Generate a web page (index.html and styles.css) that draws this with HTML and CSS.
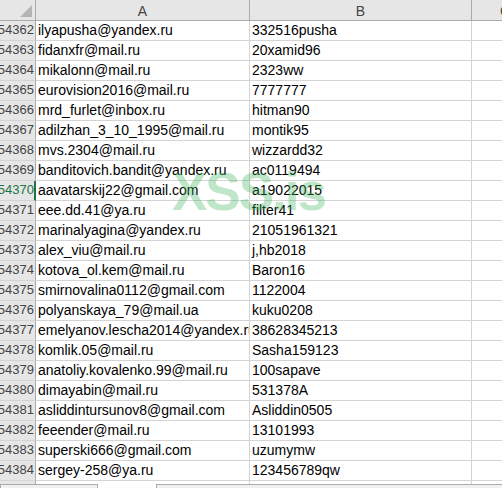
FILE: index.html
```html
<!DOCTYPE html>
<html>
<head>
<meta charset="utf-8">
<link rel="stylesheet" href="styles.css">
</head>
<body>
<div class="sheet">
  <div class="grid">
    <div class="hdr corner"><span class="tri"></span></div>
    <div class="hdr col">A</div>
    <div class="hdr col">B</div>
    <div class="hdr col colc">C</div>

    <div class="rn">54362</div><div class="c">ilyapusha@yandex.ru</div><div class="c">332516pusha</div><div class="c"></div>
    <div class="rn">54363</div><div class="c">fidanxfr@mail.ru</div><div class="c">20xamid96</div><div class="c"></div>
    <div class="rn">54364</div><div class="c">mikalonn@mail.ru</div><div class="c">2323ww</div><div class="c"></div>
    <div class="rn">54365</div><div class="c">eurovision2016@mail.ru</div><div class="c">7777777</div><div class="c"></div>
    <div class="rn">54366</div><div class="c">mrd_furlet@inbox.ru</div><div class="c">hitman90</div><div class="c"></div>
    <div class="rn">54367</div><div class="c">adilzhan_3_10_1995@mail.ru</div><div class="c">montik95</div><div class="c"></div>
    <div class="rn">54368</div><div class="c">mvs.2304@mail.ru</div><div class="c">wizzardd32</div><div class="c"></div>
    <div class="rn">54369</div><div class="c">banditovich.bandit@yandex.ru</div><div class="c">ac0119494</div><div class="c"></div>
    <div class="rn active">54370</div><div class="c">aavatarskij22@gmail.com</div><div class="c">a19022015</div><div class="c"></div>
    <div class="rn">54371</div><div class="c">eee.dd.41@ya.ru</div><div class="c">filter41</div><div class="c"></div>
    <div class="rn">54372</div><div class="c">marinalyagina@yandex.ru</div><div class="c">21051961321</div><div class="c"></div>
    <div class="rn">54373</div><div class="c">alex_viu@mail.ru</div><div class="c">j,hb2018</div><div class="c"></div>
    <div class="rn">54374</div><div class="c">kotova_ol.kem@mail.ru</div><div class="c">Baron16</div><div class="c"></div>
    <div class="rn">54375</div><div class="c">smirnovalina0112@gmail.com</div><div class="c">1122004</div><div class="c"></div>
    <div class="rn">54376</div><div class="c">polyanskaya_79@mail.ua</div><div class="c">kuku0208</div><div class="c"></div>
    <div class="rn">54377</div><div class="c">emelyanov.lescha2014@yandex.ru</div><div class="c">38628345213</div><div class="c"></div>
    <div class="rn">54378</div><div class="c">komlik.05@mail.ru</div><div class="c">Sasha159123</div><div class="c"></div>
    <div class="rn">54379</div><div class="c">anatoliy.kovalenko.99@mail.ru</div><div class="c">100sapave</div><div class="c"></div>
    <div class="rn">54380</div><div class="c">dimayabin@mail.ru</div><div class="c">531378A</div><div class="c"></div>
    <div class="rn">54381</div><div class="c">asliddintursunov8@gmail.com</div><div class="c">Asliddin0505</div><div class="c"></div>
    <div class="rn">54382</div><div class="c">feeender@mail.ru</div><div class="c">13101993</div><div class="c"></div>
    <div class="rn">54383</div><div class="c">superski666@gmail.com</div><div class="c">uzumymw</div><div class="c"></div>
    <div class="rn">54384</div><div class="c">sergey-258@ya.ru</div><div class="c">123456789qw</div><div class="c"></div>
    <div class="rn last"></div><div class="c last"></div><div class="c last"></div><div class="c last"></div>
  </div>
  <div class="tabs">
    <div class="tab t1"></div>
    <div class="gap"></div>
    <div class="tab t2"></div>
  </div>
  <div class="watermark">XSS.is</div>
</div>
</body>
</html>
```

FILE: styles.css
```css
html, body {
  margin: 0;
  padding: 0;
  background: #ffffff;
}
.sheet {
  position: relative;
  width: 502px;
  height: 488px;
  overflow: hidden;
  font-family: "Liberation Sans", Arial, sans-serif;
  font-size: 14px;
  color: #000;
}
.grid {
  display: grid;
  grid-template-columns: 36px 214px 222px 80px;
  grid-template-rows: 21px repeat(23, 20px) 3px;
  width: 552px;
}
.hdr {
  background: #e6e6e6;
  border-right: 1px solid #ababab;
  border-bottom: 1px solid #ababab;
  color: #444;
  display: flex;
  align-items: center;
  justify-content: center;
  box-sizing: border-box;
  padding-top: 1px;
}
.corner {
  position: relative;
}
.tri {
  position: absolute;
  right: 3px;
  bottom: 3px;
  width: 0;
  height: 0;
  border-left: 12px solid transparent;
  border-bottom: 12px solid #b4b4b4;
}
.colc {
  justify-content: flex-start;
  padding-left: 28px;
}
.rn {
  background: #e6e6e6;
  border-right: 1px solid #ababab;
  border-bottom: 1px solid #d4d4d4;
  color: #444;
  box-sizing: border-box;
  display: flex;
  align-items: flex-end;
  justify-content: flex-end;
  padding: 0 1px 2px 0;
  line-height: 16px;
  font-size: 13px;
  white-space: nowrap;
}
.rn.active {
  color: #217346;
  border-right: 2px solid #217346;
  padding-right: 0;
}
.c {
  border-right: 1px solid #d4d4d4;
  border-bottom: 1px solid #d4d4d4;
  box-sizing: border-box;
  display: flex;
  align-items: flex-end;
  padding: 0 0 2px 2px;
  line-height: 16px;
  white-space: nowrap;
  overflow: hidden;
}
.last {
  border-bottom: none;
}
.tabs {
  display: flex;
  height: 4px;
}
.tab {
  background: #f0f0f0;
  border-top: 1px solid #ababab;
  border-left: 1px solid #ababab;
  border-right: 1px solid #ababab;
  box-sizing: border-box;
}
.t1 {
  width: 98px;
}
.gap {
  width: 58px;
  background: #fff;
}
.t2 {
  flex: 1;
  border-right: none;
}
.watermark {
  position: absolute;
  left: 172px;
  top: 163px;
  font-family: "Liberation Sans", Arial, sans-serif;
  font-weight: bold;
  font-size: 53px;
  line-height: 58px;
  color: rgba(60, 180, 90, 0.33);
  letter-spacing: -2px;
  pointer-events: none;
}
```
